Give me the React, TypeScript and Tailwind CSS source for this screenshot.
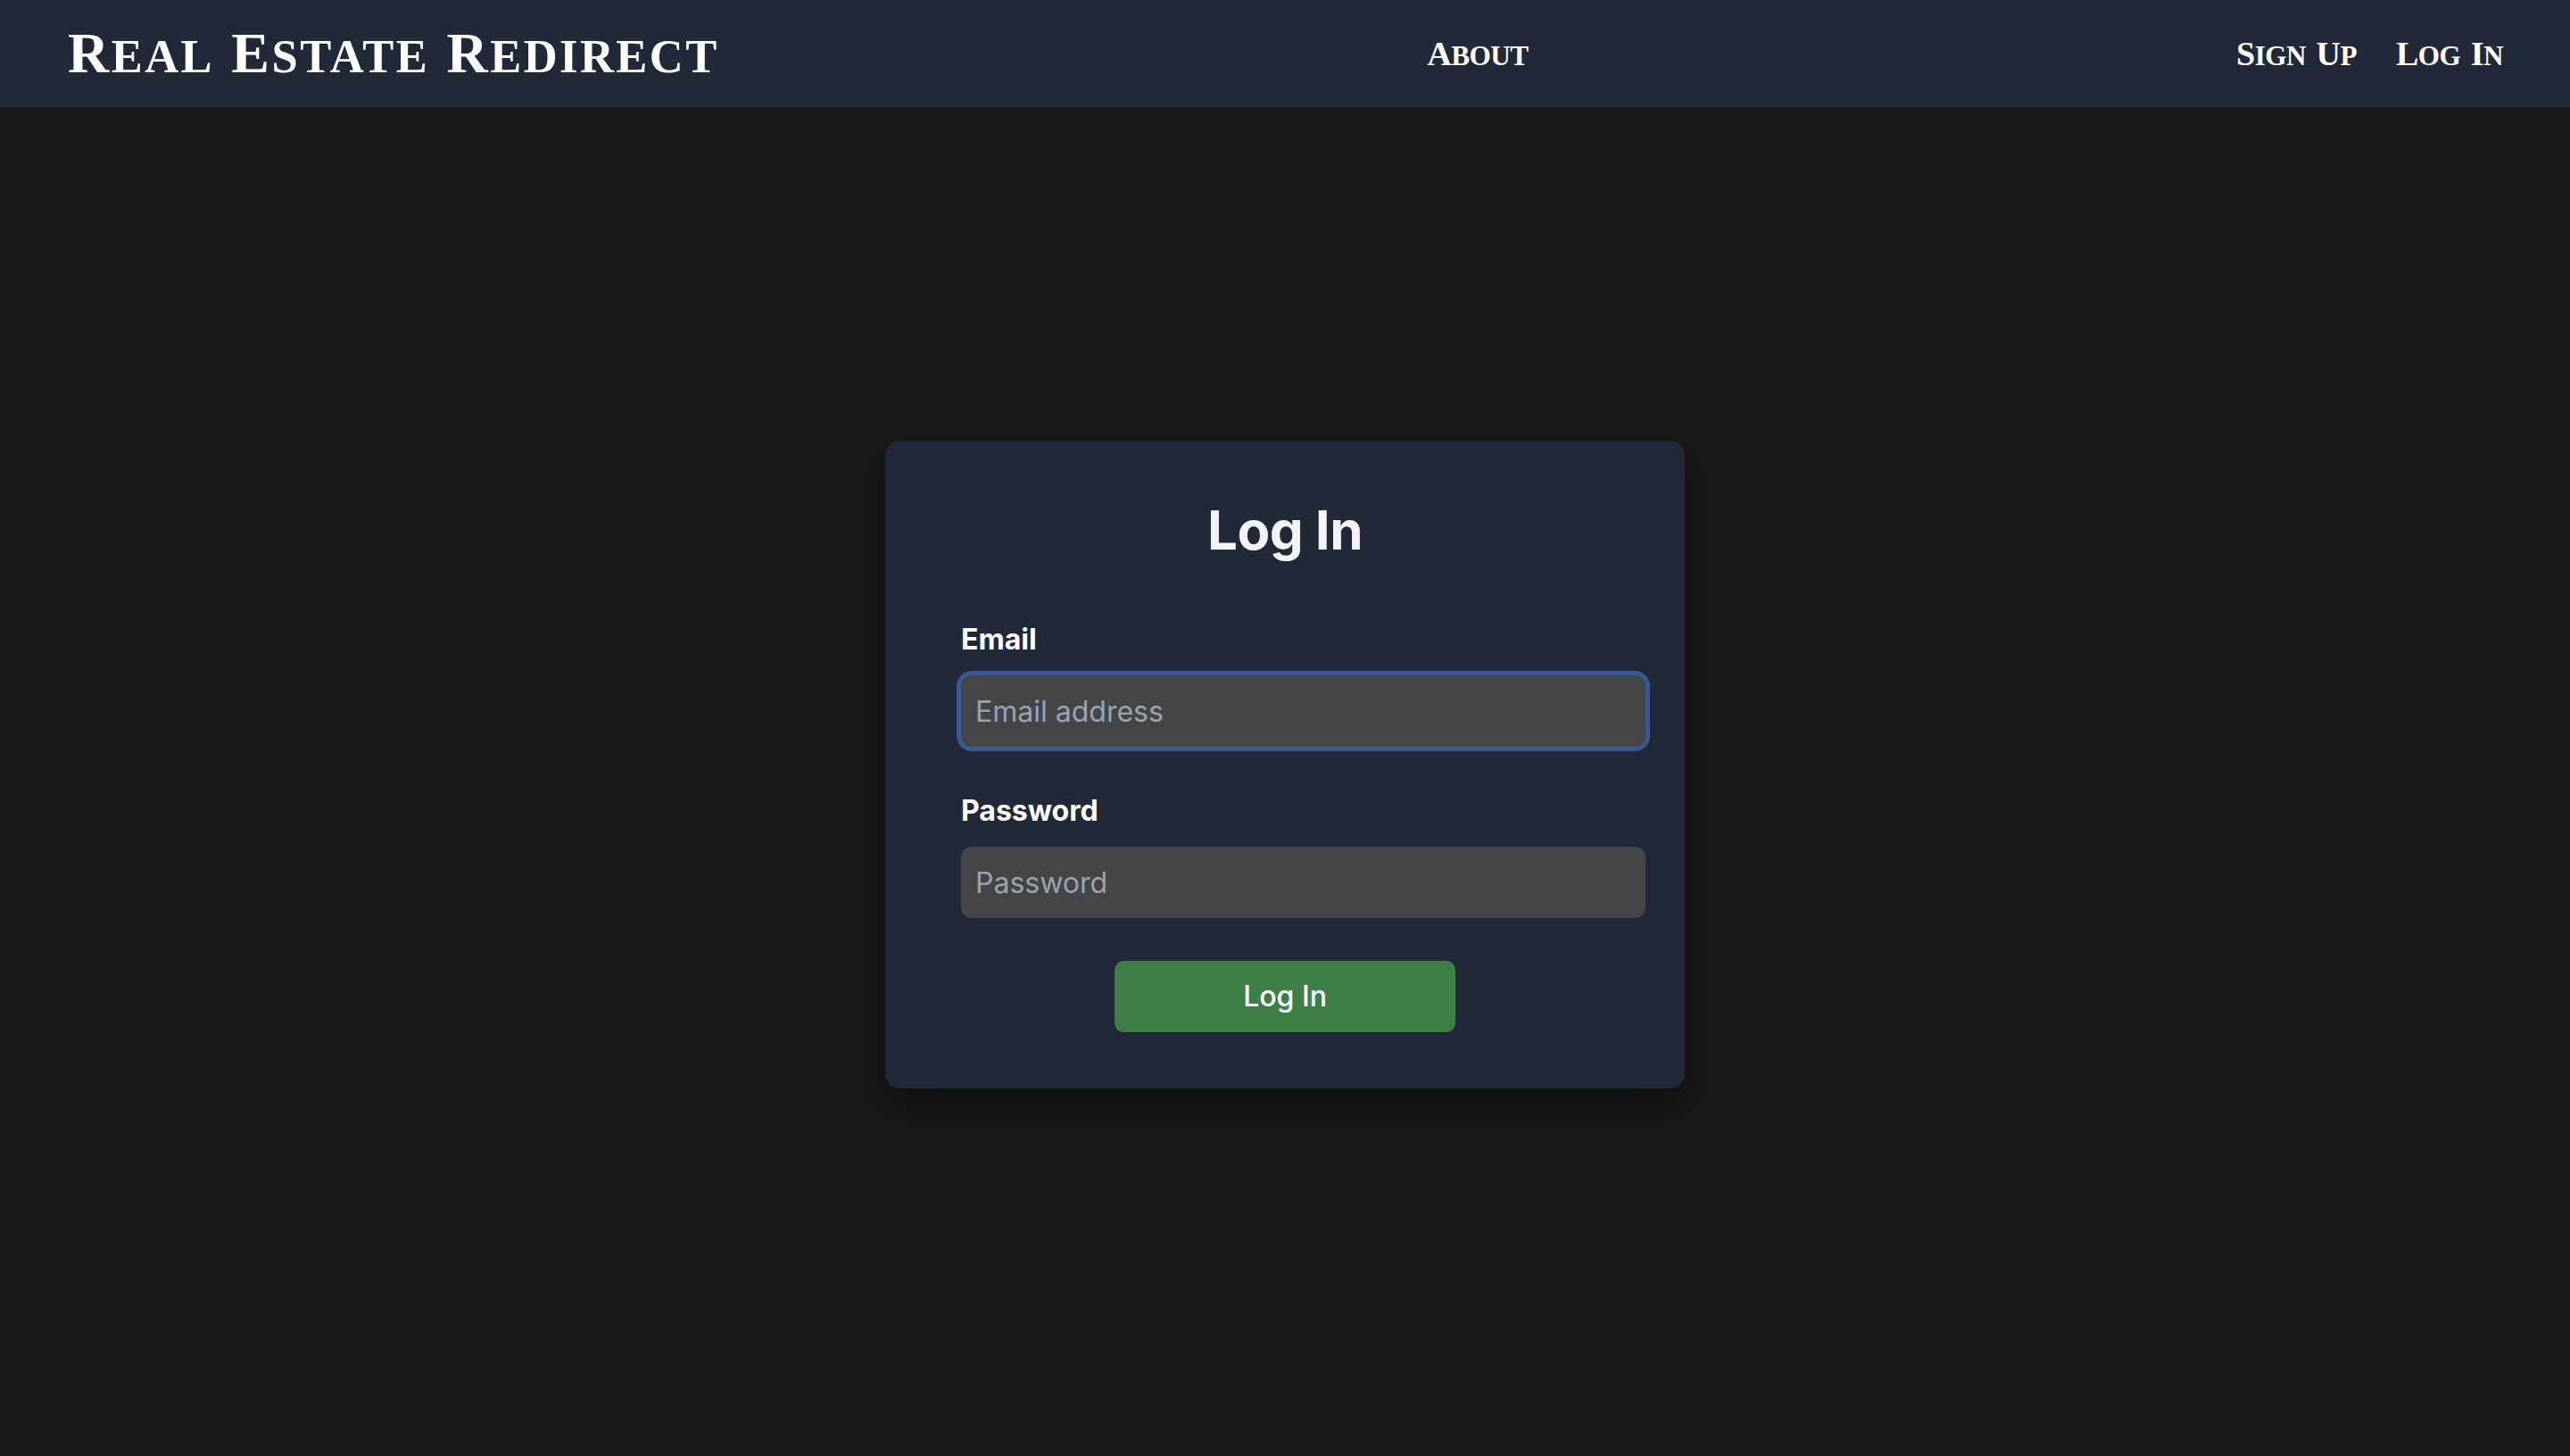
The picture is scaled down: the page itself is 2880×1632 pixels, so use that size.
import { useState } from "react";

// Slab small-caps: first letter of each word full height, rest as smaller capitals
function Caps({ text }: { text: string }) {
  return (
    <>
      {text.split(" ").map((word, i) => (
        <span key={i} className={i > 0 ? "ml-[0.3em]" : ""}>
          {word[0]}
          <span className="text-[0.82em] uppercase">{word.slice(1)}</span>
        </span>
      ))}
    </>
  );
}

export default function App() {
  const [email, setEmail] = useState("");
  const [password, setPassword] = useState("");

  return (
    <div className="min-h-screen bg-[#1a1918] font-['Inter','Liberation_Sans',sans-serif]">
      <header className="h-[120px] bg-[#212837] flex items-center justify-between pl-[76px] pr-[75px] text-white [font-family:'Liberation_Serif',serif]">
        <a className="text-[64px] font-bold leading-none tracking-[2.5px] whitespace-nowrap">
          <Caps text="Real Estate Redirect" />
        </a>
        <nav>
          <a className="text-[38px] font-bold leading-none tracking-[-0.5px]">
            <Caps text="About" />
          </a>
        </nav>
        <nav className="flex items-center gap-[44px] text-[38px] font-bold leading-none tracking-[-0.5px]">
          <a><Caps text="Sign Up" /></a>
          <a><Caps text="Log In" /></a>
        </nav>
      </header>

      <main className="flex justify-center">
        <div className="mt-[374px] w-[896px] rounded-[16px] bg-[#212838] px-[44px] pt-[64px] pb-[63px] shadow-[0_20px_40px_rgba(0,0,0,0.35)]">
          <h1 className="text-center text-[60px] leading-[72px] font-bold tracking-[-0.5px] text-[#f3f4f6]">Log In</h1>

          <form className="mt-[63px]" onSubmit={(e) => e.preventDefault()}>
            <div className="ml-[41px] w-[767px]">
              <label className="block text-[32px] leading-[48px] font-bold text-white mb-4">Email</label>
              <input
                type="email"
                value={email}
                onChange={(e) => setEmail(e.target.value)}
                placeholder="Email address"
                className="block w-full h-[80px] rounded-[12px] bg-[#444547] px-4 text-[32px] text-white placeholder:text-[#9ca3af] outline-none ring-[5px] ring-[#3a5894]"
              />
            </div>

            <div className="ml-[41px] w-[767px] mt-[48px]">
              <label className="block text-[32px] leading-[48px] font-bold text-white mb-4">Password</label>
              <input
                type="password"
                value={password}
                onChange={(e) => setPassword(e.target.value)}
                placeholder="Password"
                className="block w-full h-[80px] rounded-[12px] bg-[#444547] px-4 text-[32px] text-white placeholder:text-[#9ca3af] outline-none"
              />
            </div>

            <button
              type="submit"
              className="mx-auto mt-[48px] block w-[382px] h-[80px] rounded-[10px] bg-[#3d7f46] text-[32px] font-medium text-white"
            >
              Log In
            </button>
          </form>
        </div>
      </main>
    </div>
  );
}
